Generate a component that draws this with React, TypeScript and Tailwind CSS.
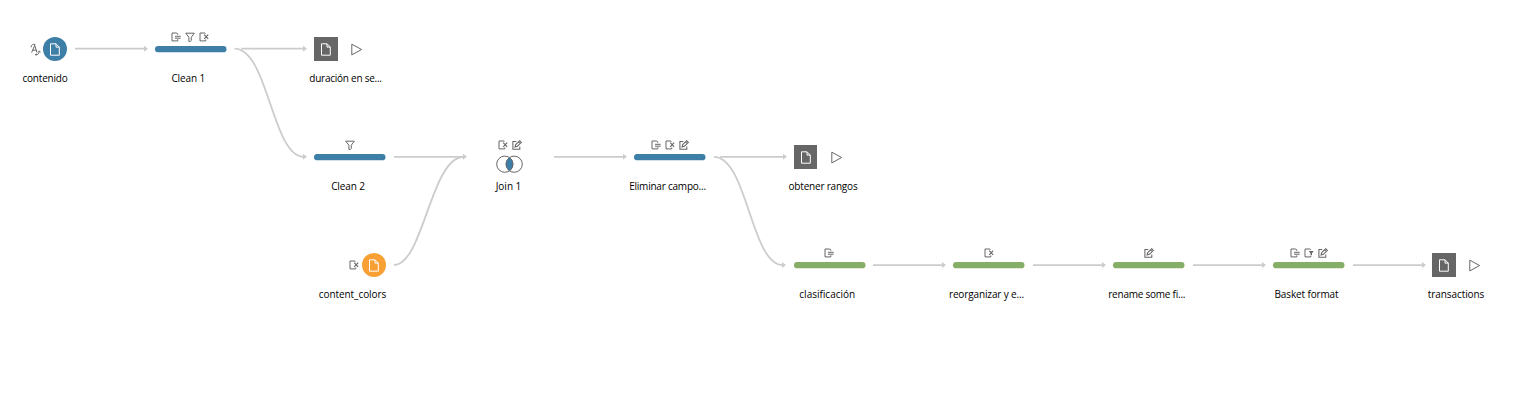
import React from "react";

type IconName = "remove" | "filter" | "delete" | "edit" | "keep";
type Color = "blue" | "green";

function FileGlyph() {
  return (
    <svg width="10" height="13" viewBox="0 0 10 13" fill="none" stroke="#fff" strokeWidth="1">
      <path d="M.5.8H6L9.300 4.100v8.100H.5zM6 .8V4.100h3.300" />
    </svg>
  );
}

function Glyph({ name }: { name: IconName }) {
  return (
    <svg width="10" height="10" viewBox="0 0 10 10" fill="none" stroke="#666" strokeWidth="1">
      {name === "remove" && <path d="M6.800 2.800V2L5.800 1H1v7.900h5.800V7.300M4 4.300H9.700M4 6.200H9.700" />}
      {name === "filter" && <path d="M.700 1.200h8.600L6.300 5.200v3.300L5.300 9.400H3.900V5.200z" />}
      {name === "delete" && (
        <>
          <path d="M6.500 1.500L6 1H1v7.900h5.800V7.500" />
          <path d="M5.200 2.700L9.200 6.900M9.200 2.700L5.200 6.900" strokeWidth="1.150" />
        </>
      )}
      {name === "edit" && (
        <path d="M4.300 1.500H.9v7.700h6.900V6.500M3.100 7l.6-2.400L7.700.700l1.700 1.700L5.400 6.300zM6.500 1.900l1.700 1.700" strokeWidth="1.050" />
      )}
      {name === "keep" && (
        <>
          <path d="M6.700 1.900V1.700L6 1H1v7.900h5.800V7.900" />
          <path d="M4.700 3h5L8 5.200v2.100H6.500V5.200z" fill="#666" stroke="none" />
        </>
      )}
    </svg>
  );
}

function PlayGlyph() {
  return (
    <svg width="12" height="13" viewBox="0 0 12 13" fill="none" stroke="#666">
      <path d="M.8 1.200v10.700L10.600 6.500z" />
    </svg>
  );
}

function TypeGlyph() {
  return (
    <svg width="11" height="13" viewBox="0 0 11 13" fill="none" stroke="#666" strokeWidth="1">
      <path d="M1.600 9.500L4.700 2.500L7 9.500M2.800 7.200h3.700M1 4.300C1.200 1.700 3 .9 5 1.500L4.700 2.500M5.500 11.700c2.600.2 3.700-1.300 3.800-3.500M8.200 9.200l1.100-1.200L10.600 9.200M6.300 10.600l-1 1 1.100.9" />
    </svg>
  );
}

function Label({ text, className }: { text: string; className: string }) {
  return (
    <span
      className={`absolute left-1/2 -translate-x-1/2 whitespace-pre font-['Open_Sans','Noto_Sans',sans-serif] text-[10px] leading-[16px] text-black ${className}`}
    >
      {text}
    </span>
  );
}

function Step({ at, color, icons, label, spacing }: {
  at: string;
  color: Color;
  icons: IconName[];
  label: string;
  spacing: string;
}) {
  return (
    <div className={`absolute h-[48px] w-[71.500px] ${at}`}>
      <div className="flex h-[13.500px] justify-center gap-[4px]">
        {icons.map((name) => <Glyph key={name} name={name} />)}
      </div>
      <svg className="block" width="72" height="7" viewBox="0 0 72 7">
        <rect y="0" width="71.500" height="6.300" rx="3.150" className={color === "blue" ? "fill-[#3e7fa8]" : "fill-[#87ae67]"} />
      </svg>
      <Label text={label} className={`top-[38px] ${spacing}`} />
    </div>
  );
}

function Output({ at, label, spacing }: { at: string; label: string; spacing: string }) {
  return (
    <div className={`absolute flex w-[63px] items-center gap-[13px] ${at}`}>
      <div className="flex size-[24px] shrink-0 items-center justify-center">
        <div className="flex h-[23.500px] w-[23.500px] items-center justify-center bg-[#666]">
          <FileGlyph />
        </div>
      </div>
      <PlayGlyph />
      <Label text={label} className={`top-[33px] ${spacing}`} />
    </div>
  );
}

const lines = [
  [75, 148, 48.7], [241, 307, 48.7], [394, 467, 156.8], [554, 627, 156.8],
  [720, 787, 156.8], [873, 946, 265.1], [1033, 1106, 265.1], [1193, 1266, 265.1], [1353, 1426, 265.1],
];

const curves = [
  "M234.500 48.700C268 49 272 155 303 156.800",
  "M714 156.800C747 157 751 263.500 782 265.100",
  "M394 265C423 265 431 158 463 157",
];

function Connectors() {
  return (
    <svg className="absolute inset-0" width="1535" height="403" fill="none" stroke="#ccc" strokeWidth="1.800">
      {lines.map(([x1, x2, y]) => (
        <g key={`${x1}-${y}`}>
          <path d={`M${x1} ${y}H${x2 - 3}`} />
          <path d={`M${x2 - 4} ${y - 3}L${x2} ${y}L${x2 - 4} ${y + 3}z`} fill="#ccc" stroke="none" />
        </g>
      ))}
      {curves.map((d) => <path key={d} d={d} />)}
      <path d="M303 153.800L307 156.800L303 159.800zM782 262.100L786 265.100L782 268.100z" fill="#ccc" stroke="none" />
    </svg>
  );
}

export default function App() {
  return (
    <main className="relative h-[403px] w-[1535px] overflow-hidden bg-white">
      <Connectors />

      <div className="absolute left-[30px] top-[37px] flex h-[24px] w-[36.500px] items-center justify-between">
        <TypeGlyph />
        <div className="flex size-[24px] items-center justify-center rounded-full bg-[#3e7fa8]">
          <FileGlyph />
        </div>
      </div>
      <div className="absolute left-[45px] top-[37px]"><Label text="contenido" className="top-[33px] tracking-[-0.2px]" /></div>

      <Step at="left-[154.500px] top-[32px]" color="blue" icons={["remove", "filter", "delete"]} label="Clean 1" spacing="ml-[-2px] tracking-[-0.1px]" />
      <Output at="left-[314px] top-[37px]" label="duración en se..." spacing="tracking-[-0.25px]" />

      <Step at="left-[314.250px] top-[140px]" color="blue" icons={["filter"]} label="Clean 2" spacing="ml-[-2px] tracking-[-0.1px]" />

      <div className="absolute left-[496px] top-[140px] flex w-[27px] flex-col items-center">
        <div className="flex gap-[4px]"><Glyph name="delete" /><Glyph name="edit" /></div>
        <svg className="mt-[5px]" width="27" height="18" viewBox="0 0 27 18" fill="none" stroke="#666">
          <circle cx="8.800" cy="9.200" r="8.100" />
          <circle cx="18.200" cy="9.200" r="8.100" />
          <path d="M13.500 2.600a8.100 8.100 0 0 1 0 13.200a8.100 8.100 0 0 1 0-13.200z" fill="#3e7fa8" strokeWidth=".8" />
        </svg>
        <Label text="Join 1" className="top-[38px] ml-[-1px]" />
      </div>

      <Step at="left-[633.750px] top-[140px]" color="blue" icons={["remove", "delete", "edit"]} label="Eliminar campo..." spacing="ml-[-2px] tracking-[-0.22px]" />
      <Output at="left-[793.500px] top-[145px]" label="obtener rangos" spacing="ml-[-2px] tracking-[-0.2px]" />

      <div className="absolute left-[349px] top-[253px] flex h-[24px] w-[37px] items-center justify-between">
        <Glyph name="delete" />
        <div className="flex size-[24px] items-center justify-center rounded-full bg-[#f9a035]">
          <FileGlyph />
        </div>
      </div>
      <div className="absolute left-[352.500px] top-[253px]"><Label text="content_colors" className="top-[33px] tracking-[-0.07px]" /></div>

      <Step at="left-[793.500px] top-[248px]" color="green" icons={["remove"]} label="clasificación" spacing="ml-[-2px]" />
      <Step at="left-[953.250px] top-[248px]" color="green" icons={["delete"]} label="reorganizar y e..." spacing="ml-[-2.500px] tracking-[-0.13px]" />
      <Step at="left-[1113px] top-[248px]" color="green" icons={["edit"]} label="rename some fi..." spacing="ml-[-2px] tracking-[-0.23px]" />
      <Step at="left-[1272.750px] top-[248px]" color="green" icons={["remove", "keep", "edit"]} label="Basket format" spacing="ml-[-2px] tracking-[-0.13px]" />
      <Output at="left-[1432px] top-[253px]" label="transactions" spacing="ml-[-7.500px] tracking-[-0.08px]" />
    </main>
  );
}
